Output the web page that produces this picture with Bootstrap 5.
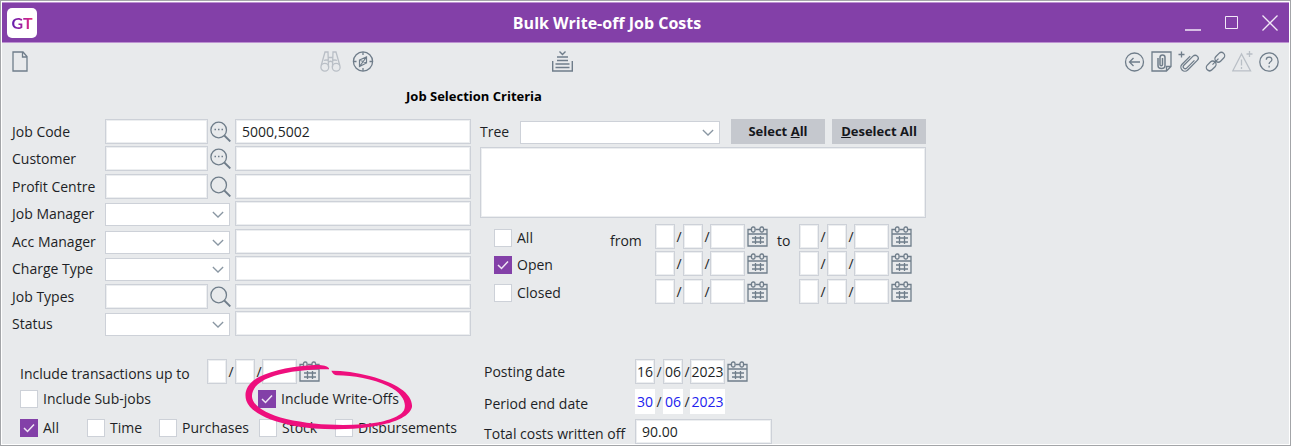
<!DOCTYPE html>
<html lang="en">
<head>
<meta charset="utf-8">
<meta name="viewport" content="width=device-width, initial-scale=1">
<title>Bulk Write-off Job Costs</title>
<link rel="stylesheet" href="https://cdn.jsdelivr.net/npm/bootstrap@5.3.0/dist/css/bootstrap.min.css">
<style>
  :root { --line: #cdd1d8; --ink: #1d1f26; --icon: #6f7d8a; --brand: #8340a8; }
  body { font: 14px/20px "Open Sans", "Noto Sans", sans-serif; color: var(--ink); background: #e8eaec; }
  svg { display: block; fill: none; stroke: currentColor; stroke-width: 1.3; }
  .window { min-height: 100vh; border: 1px solid #a3a5a8; padding: 1px 1px 0; box-shadow: inset 0 0 0 1px #fff; }
  .titlebar { height: 41px; background: var(--brand); border: solid #bd92d2; border-width: 1px 0; padding: 0 11px 0 5px; color: #fff; }
  .titlebar h1 { font-size: 16px; line-height: 20px; font-weight: 700; }
  .logo { width: 30px; height: 30px; border-radius: 5px; background: #fff; }
  .logo span { font: 700 16px/20px Lato, sans-serif; background: linear-gradient(90deg, #5b1fae, #a020a0 50%, #ee2a7b); -webkit-background-clip: text; background-clip: text; color: transparent; }
  .iconbtn { border: 0; padding: 0; background: none; color: var(--icon); flex: none; }
  .iconbtn:disabled { color: #b9bfc6; }
  .titlebar .iconbtn { color: #f2e9f7; }
  .toolbar { padding: 8px 9px 0 8px; height: 43px; }
  .tools-a { margin-left: 289px; gap: 11px; }
  .tools-b { margin-left: 178px; }
  .tools-c { gap: 6px; }
  main { max-width: 934px; padding: 0 0 1px 10px; }
  h2 { font-size: 13px; line-height: 20px; font-weight: 700; color: #000; margin: 0 0 13px; }
  .panes { display: grid; grid-template-columns: 459px 446px; column-gap: 9px; }
  .criteria { display: grid; grid-template-columns: 93px 130px 236px; grid-template-rows: repeat(4, 27px 28px); align-content: start; }
  .lookup { display: flex; align-items: flex-start; gap: 2px; }
  .lookup .iconbtn { margin-top: 2px; }
  .field, .picker { border: 1px solid var(--line); border-radius: 0; background: #fff; color: var(--ink); padding: 0 6px; outline-offset: -1px; }
  .field { height: 25px; width: 100%; min-width: 0; box-shadow: inset 0 0 0 1px #eceef0; }
  .picker { height: 23px; width: 125px; margin-top: 2px; appearance: none; background: #fff url("data:image/svg+xml,%3Csvg xmlns='http://www.w3.org/2000/svg' viewBox='0 0 14 8'%3E%3Cpath d='M1 1l6 6 6-6' fill='none' stroke='%238a97a3' stroke-width='1.5'/%3E%3C/svg%3E") no-repeat right 5px center / 12px 7px; }
  .code { width: 103px; flex: none; }
  .lbl { line-height: 25px; white-space: nowrap; }
  .tree { width: 200px; }
  .tree-tools { display: grid; grid-template-columns: 211px 101px 94px; }
  .grey { background: #c5c8ce; border: 0; border-radius: 0; width: 94px; height: 25px; padding: 0; font-size: 13px; line-height: 25px; font-weight: 700; color: #15171c; white-space: nowrap; }
  .notes { height: 71px; resize: none; margin: 3px 0 6px; display: block; }
  .ranges { display: grid; grid-template-rows: 27px 28px 27px; padding-left: 14px; }
  .range { display: grid; grid-template-columns: 116px 45px 122px 22px 1fr; align-items: start; }
  .tick { appearance: none; width: 18px; height: 18px; margin: 0; flex: none; background: #fff; border: 1px solid var(--line); }
  .tick:checked { border-color: var(--brand); background: var(--brand) url("data:image/svg+xml,%3Csvg xmlns='http://www.w3.org/2000/svg' viewBox='0 0 18 18'%3E%3Cpath d='M4 9l3.500 3.500 6.500-7' fill='none' stroke='%23f0e6f5' stroke-width='1.500'/%3E%3C/svg%3E") center / 18px; }
  .check { display: flex; gap: 5px; align-items: center; white-space: nowrap; }
  .ranges .check { padding-top: 4px; }
  .date { display: flex; }
  .date .field { width: 20px; padding: 0; text-align: center; flex: none; }
  .date .year { width: 35px; }
  .date span { width: 8px; line-height: 25px; text-align: center; flex: none; }
  .date span + .year { margin-left: -1px; }
  .date .iconbtn { margin: 2px 0 0 2px; height: 21px; }
  .period .field { border-color: #fff; box-shadow: none; color: #2222ee; }
  .lower { padding-top: 20px; }
  .options { padding-left: 8px; position: relative; }
  .upto { display: grid; grid-template-columns: 187px auto; }
  .upto .lbl { padding-top: 2px; }
  .pair { display: grid; grid-template-columns: 238px auto; margin-top: 3px; }
  .kinds { display: grid; grid-template-columns: 67px 72px 100px 76px auto; margin-top: 9px; }
  .posting { display: grid; grid-template-columns: 151px auto; row-gap: 5px; padding-left: 4px; place-content: start; }
  .low { position: static; height: 25px; padding-top: 2px; }
  .total { width: 137px; }
  .ring { position: absolute; left: 231px; top: 3px; width: 170px; height: 68px; stroke: none; fill: #ee0f7d; pointer-events: none; }
</style>
</head>
<body>
<svg width="0" height="0" class="position-absolute" aria-hidden="true">
  <symbol id="cal" viewBox="0 0 21 21"><path d="M4 3.500H1V20h19V3.500h-3M8.500 3.500h4.500M1 8h19"/><rect x="4.500" y="1" width="3.500" height="5" rx="1.500"/><rect x="13" y="1" width="3.500" height="5" rx="1.500"/><path d="M5 12h12M5 16h12M8.500 10v8M13.500 10v8"/></symbol>
  <symbol id="lens" viewBox="0 0 21 21"><circle cx="8.700" cy="9" r="7.800"/><path d="M14.300 14.500l6 6" stroke-width="1.800"/></symbol>
</svg>
<div class="window d-flex flex-column">
  <header class="titlebar d-flex align-items-center justify-content-between">
    <div class="logo d-flex align-items-center justify-content-center"><span>GT</span></div>
    <h1 class="m-0">Bulk Write-off Job Costs</h1>
    <div class="d-flex gap-4 ps-2">
      <button class="iconbtn" aria-label="Minimise"><svg width="16" height="16" viewBox="0 0 16 16"><path d="M0 15h16" stroke-width="1.500"/></svg></button>
      <button class="iconbtn" aria-label="Maximise"><svg width="13" height="16" viewBox="0 0 13 16"><path d="M.5 1.500h12v12H.5z" stroke-width="1"/></svg></button>
      <button class="iconbtn" aria-label="Close"><svg width="16" height="16" viewBox="0 0 16 16"><path d="M.5.5l15 15M15.500.5l-15 15"/></svg></button>
    </div>
  </header>
  <nav class="toolbar d-flex align-items-start" aria-label="Tools">
    <button class="iconbtn" aria-label="New"><svg width="21" height="21" viewBox="0 0 21 21"><path d="M3 1h10l4 4.500V20H3zM12.500 1v5H17"/></svg></button>
    <div class="tools-a d-flex">
      <button class="iconbtn" disabled aria-label="Find"><svg width="21" height="21" viewBox="0 0 21 21"><circle cx="4.800" cy="16.200" r="3.900"/><circle cx="16.200" cy="16.200" r="3.900"/><path d="M1.200 14.500L5 1h3l.5 15M19.800 14.500L16 1h-3l-.5 15M8.500 6.500h4M8.700 11q1.800-1.500 3.600 0M4 9.500q2-1 4.300 0M12.700 9.500q2.300-1 4.300 0"/></svg></button>
      <button class="iconbtn" aria-label="Navigate"><svg width="22" height="21" viewBox="0 0 22 21"><circle cx="11" cy="10.500" r="9.600"/><path d="M11 1v3M11 17v3M1.500 10.500h3M17.500 10.500h3"/><path d="M7.500 9l7-3v6l-7 3.500zM7.500 9l7 3M14.500 6l-7 9.500" stroke-width="1.200"/></svg></button>
    </div>
    <div class="tools-b">
      <button class="iconbtn" aria-label="Process"><svg width="21" height="21" viewBox="0 0 21 21"><path d="M7.500.5l3 3 3-3M5 6h11M5 9.500h11M3.500 13h14M3.500 16.500h14M.7 10v10h19.600V10" stroke-width="1.400"/></svg></button>
    </div>
    <div class="tools-c d-flex ms-auto">
      <button class="iconbtn" aria-label="Back"><svg width="21" height="21" viewBox="0 0 21 21"><circle cx="10.500" cy="11" r="9"/><path d="M16 11H5.500M9.500 7l-4 4 4 4"/></svg></button>
      <button class="iconbtn" aria-label="Attachments"><svg width="21" height="21" viewBox="0 0 21 21"><path d="M1 1h19v14.500L15.500 20H1zM20 15.500h-4.500V20"/><path d="M7 7v7.500q0 3 3.500 3t3.500-3V6.500Q14 4 11.500 4T9 6.500v7q0 1.300 1.200 1.300t1.300-1.300V7" stroke-width="1.500"/></svg></button>
      <button class="iconbtn" aria-label="Add attachment"><svg width="21" height="21" viewBox="0 0 21 21"><path d="M3.500.5v6M.5 3.500h6"/><g transform="translate(11.500 11.500) rotate(45)"><path d="M-4-5V6.500a4 4 0 0 0 8 0V-7a3 3 0 0 0-6 0V6a2 2 0 0 0 4 0V-5"/></g></svg></button>
      <button class="iconbtn" aria-label="Link"><svg width="21" height="21" viewBox="0 0 21 21"><rect x="-5.500" y="-3.300" width="11" height="6.600" rx="3.300" transform="translate(14.800 6.300) rotate(-45)"/><rect x="-5.500" y="-3.300" width="11" height="6.600" rx="3.300" transform="translate(6.200 14.900) rotate(-45)"/><path d="M7.500 13.600l6-6"/></svg></button>
      <button class="iconbtn" disabled aria-label="Add warning"><svg width="21" height="21" viewBox="0 0 21 21"><path d="M9.500 3L.8 19.800h17.700zM9.500 8.500v6M9.500 16v2M17.500 0v6M14.500 3h6"/></svg></button>
      <button class="iconbtn" aria-label="Help"><svg width="21" height="21" viewBox="0 0 21 21"><circle cx="10" cy="11" r="9.200"/><path d="M7.300 8.800q0-2.600 2.800-2.600t2.800 2.400q0 1.400-1.400 2.200T10.100 13M10.100 14.800v1.700"/></svg></button>
    </div>
  </nav>
  <main class="w-100">
    <h2 class="text-center">Job Selection Criteria</h2>
    <div class="panes">
      <div class="criteria">
        <label class="lbl" for="job">Job Code</label>
        <div class="lookup"><input class="field code" id="job"><button class="iconbtn" aria-label="Look up job"><svg width="21" height="21" viewBox="0 0 21 21"><use href="#lens"/><path d="M4.500 8.500h1.500M8 8.500h1.500M11.500 8.500h1.500"/></svg></button></div>
        <input class="field" value="5000,5002" aria-label="Job codes">
        <label class="lbl" for="cust">Customer</label>
        <div class="lookup"><input class="field code" id="cust"><button class="iconbtn" aria-label="Look up customer"><svg width="21" height="21" viewBox="0 0 21 21"><use href="#lens"/><path d="M4.500 8.500h1.500M8 8.500h1.500M11.500 8.500h1.500"/></svg></button></div>
        <input class="field" aria-label="Customers">
        <label class="lbl" for="pc">Profit Centre</label>
        <div class="lookup"><input class="field code" id="pc"><button class="iconbtn" aria-label="Look up profit centre"><svg width="21" height="21"><use href="#lens"/></svg></button></div>
        <input class="field" aria-label="Profit centres">
        <label class="lbl" for="jm">Job Manager</label>
        <div><select class="picker" id="jm"></select></div>
        <input class="field" aria-label="Job managers">
        <label class="lbl" for="am">Acc Manager</label>
        <div><select class="picker" id="am"></select></div>
        <input class="field" aria-label="Account managers">
        <label class="lbl" for="ct">Charge Type</label>
        <div><select class="picker" id="ct"></select></div>
        <input class="field" aria-label="Charge types">
        <label class="lbl" for="jt">Job Types</label>
        <div class="lookup"><input class="field code" id="jt"><button class="iconbtn" aria-label="Look up job type"><svg width="21" height="21"><use href="#lens"/></svg></button></div>
        <input class="field" aria-label="Selected job types">
        <label class="lbl" for="st">Status</label>
        <div><select class="picker" id="st"></select></div>
        <input class="field" aria-label="Statuses">
      </div>
      <div>
        <div class="d-flex justify-content-between">
          <label class="lbl" for="tree">Tree</label>
          <div class="tree-tools">
            <select class="picker tree" id="tree"></select>
            <button class="btn grey">Select <u>A</u>ll</button>
            <button class="btn grey"><u>D</u>eselect All</button>
          </div>
        </div>
        <textarea class="field notes" aria-label="Tree selection"></textarea>
        <div class="ranges">
          <div class="range">
            <label class="check"><input class="tick" type="checkbox">All</label>
            <span class="lbl pt-1">from</span>
            <div class="date"><input class="field" aria-label="Day"><span>/</span><input class="field" aria-label="Month"><span>/</span><input class="field year" aria-label="Year"><button class="iconbtn" aria-label="Calendar"><svg width="21" height="21"><use href="#cal"/></svg></button></div>
            <span class="lbl pt-1">to</span>
            <div class="date"><input class="field" aria-label="Day"><span>/</span><input class="field" aria-label="Month"><span>/</span><input class="field year" aria-label="Year"><button class="iconbtn" aria-label="Calendar"><svg width="21" height="21"><use href="#cal"/></svg></button></div>
          </div>
          <div class="range">
            <label class="check"><input class="tick" type="checkbox" checked>Open</label>
            <span></span>
            <div class="date"><input class="field" aria-label="Day"><span>/</span><input class="field" aria-label="Month"><span>/</span><input class="field year" aria-label="Year"><button class="iconbtn" aria-label="Calendar"><svg width="21" height="21"><use href="#cal"/></svg></button></div>
            <span></span>
            <div class="date"><input class="field" aria-label="Day"><span>/</span><input class="field" aria-label="Month"><span>/</span><input class="field year" aria-label="Year"><button class="iconbtn" aria-label="Calendar"><svg width="21" height="21"><use href="#cal"/></svg></button></div>
          </div>
          <div class="range">
            <label class="check"><input class="tick" type="checkbox">Closed</label>
            <span></span>
            <div class="date"><input class="field" aria-label="Day"><span>/</span><input class="field" aria-label="Month"><span>/</span><input class="field year" aria-label="Year"><button class="iconbtn" aria-label="Calendar"><svg width="21" height="21"><use href="#cal"/></svg></button></div>
            <span></span>
            <div class="date"><input class="field" aria-label="Day"><span>/</span><input class="field" aria-label="Month"><span>/</span><input class="field year" aria-label="Year"><button class="iconbtn" aria-label="Calendar"><svg width="21" height="21"><use href="#cal"/></svg></button></div>
          </div>
        </div>
      </div>
    </div>
    <div class="panes lower">
      <div class="options">
        <div class="upto">
          <span class="lbl">Include transactions up to</span>
          <div class="date"><input class="field" aria-label="Day"><span>/</span><input class="field" aria-label="Month"><span>/</span><input class="field year" aria-label="Year"><button class="iconbtn" aria-label="Calendar"><svg width="21" height="21"><use href="#cal"/></svg></button></div>
        </div>
        <div class="pair">
          <label class="check"><input class="tick" type="checkbox">Include Sub-jobs</label>
          <label class="check"><input class="tick" type="checkbox" checked>Include Write-Offs</label>
        </div>
        <div class="kinds">
          <label class="check"><input class="tick" type="checkbox" checked>All</label>
          <label class="check"><input class="tick" type="checkbox">Time</label>
          <label class="check"><input class="tick" type="checkbox">Purchases</label>
          <label class="check"><input class="tick" type="checkbox">Stock</label>
          <label class="check"><input class="tick" type="checkbox">Disbursements</label>
        </div>
        <svg class="ring" viewBox="70 55 510 204" aria-hidden="true"><path d="M328 74C322 65 305 63 285 64C230 67 160 78 118 100C82 119 72 146 80 171C92 206 150 232 220 246C290 259 380 260 450 250C520 240 570 220 577 190C580 150 530 118 450 97C410 86 370 81 335 81Q340 93 352 95C400 95 460 106 505 127C550 148 562 180 553 200C540 222 490 238 430 242C350 247 270 242 200 226C140 212 100 188 97 160C95 130 125 108 165 96C210 83 270 76 328 77Z"/></svg>
      </div>
      <div class="posting">
        <span class="lbl">Posting date</span>
        <div class="date"><input class="field" value="16" aria-label="Day"><span>/</span><input class="field" value="06" aria-label="Month"><span>/</span><input class="field year" value="2023" aria-label="Year"><button class="iconbtn" aria-label="Calendar"><svg width="21" height="21"><use href="#cal"/></svg></button></div>
        <span class="lbl low">Period end date</span>
        <div class="date period"><input class="field" value="30" readonly aria-label="Day"><span>/</span><input class="field" value="06" readonly aria-label="Month"><span>/</span><input class="field year" value="2023" readonly aria-label="Year"></div>
        <label class="lbl low" for="total">Total costs written off</label>
        <input class="field total" id="total" value="90.00">
      </div>
    </div>
  </main>
</div>
<script src="https://cdn.jsdelivr.net/npm/bootstrap@5.3.0/dist/js/bootstrap.bundle.min.js"></script>
</body>
</html>
